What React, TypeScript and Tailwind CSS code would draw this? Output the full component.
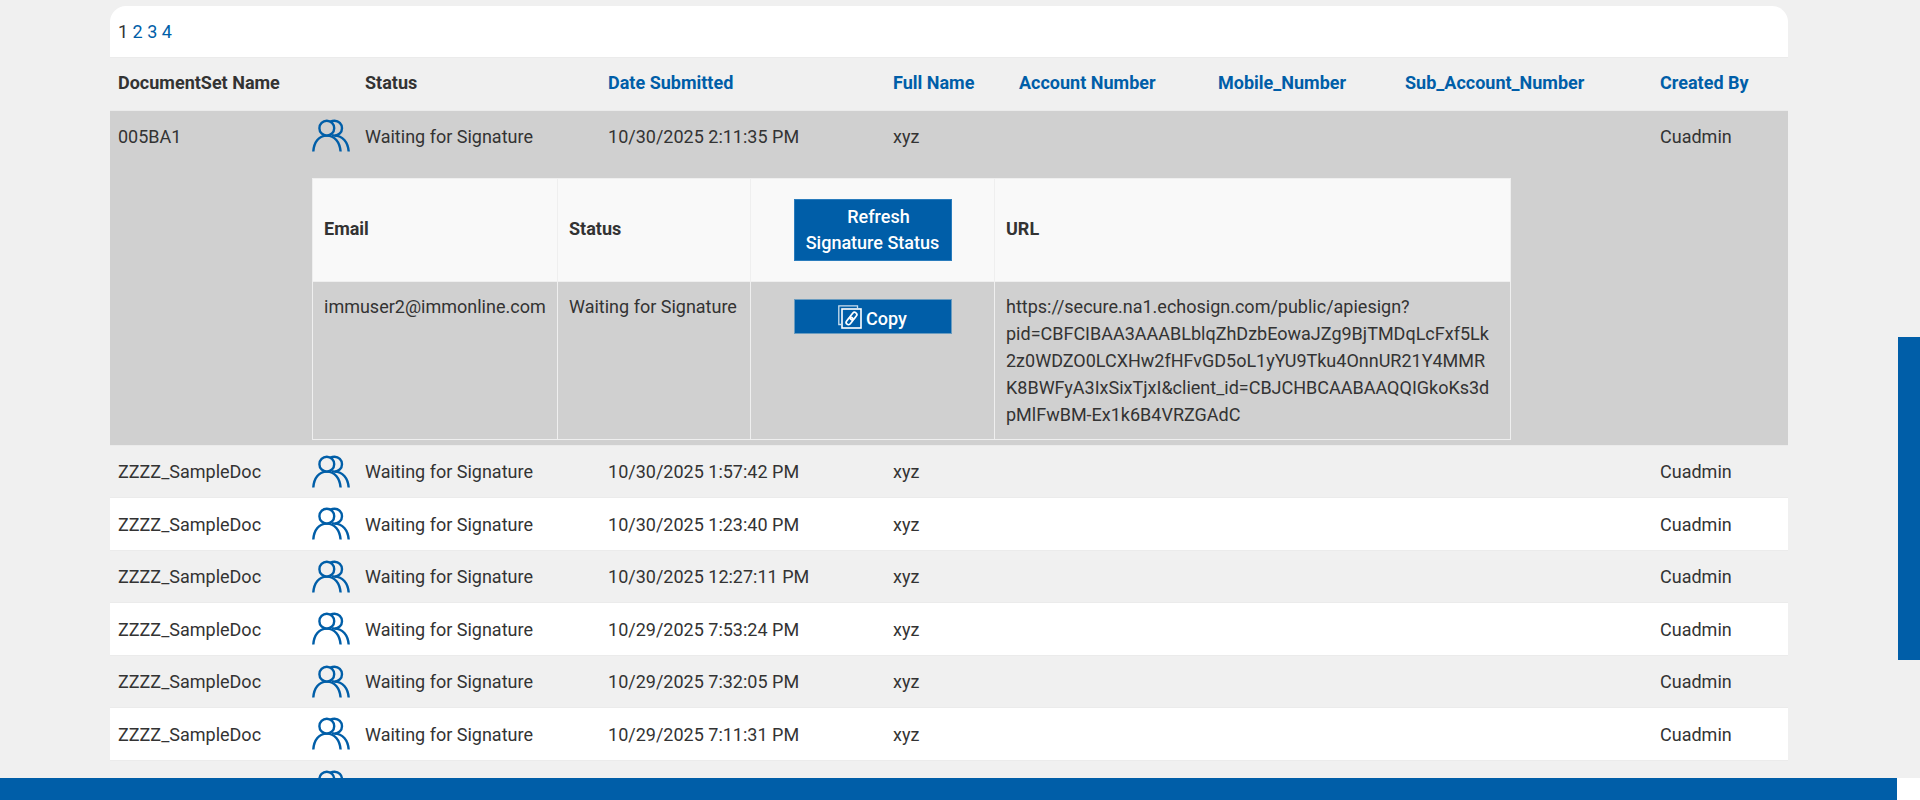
import { Fragment } from "react";

const headings = [
  { label: "DocumentSet Name", span: 2, sortable: false },
  { label: "Status", span: 1, sortable: false },
  { label: "Date Submitted", span: 1, sortable: true },
  { label: "Full Name", span: 1, sortable: true },
  { label: "Account Number", span: 1, sortable: true },
  { label: "Mobile_Number", span: 1, sortable: true },
  { label: "Sub_Account_Number", span: 1, sortable: true },
  { label: "Created By", span: 1, sortable: true },
];

const waiting = { status: "Waiting for Signature", fullName: "xyz", createdBy: "Cuadmin" };

const rows = [
  { ...waiting, name: "005BA1", date: "10/30/2025 2:11:35 PM", open: true },
  { ...waiting, name: "ZZZZ_SampleDoc", date: "10/30/2025 1:57:42 PM", open: false },
  { ...waiting, name: "ZZZZ_SampleDoc", date: "10/30/2025 1:23:40 PM", open: false },
  { ...waiting, name: "ZZZZ_SampleDoc", date: "10/30/2025 12:27:11 PM", open: false },
  { ...waiting, name: "ZZZZ_SampleDoc", date: "10/29/2025 7:53:24 PM", open: false },
  { ...waiting, name: "ZZZZ_SampleDoc", date: "10/29/2025 7:32:05 PM", open: false },
  { ...waiting, name: "ZZZZ_SampleDoc", date: "10/29/2025 7:11:31 PM", open: false },
  { name: "", status: "", date: "", fullName: "", createdBy: "", open: false },
];

const signUrl =
  "https://secure.na1.echosign.com/public/apiesign?pid=CBFCIBAA3AAABLblqZhDzbEowaJZg9BjTMDqLcFxf5Lk2z0WDZO0LCXHw2fHFvGD5oL1yYU9Tku4OnnUR21Y4MMRK8BWFyA3IxSixTjxI&client_id=CBJCHBCAABAAQQIGkoKs3dpMlFwBM-Ex1k6B4VRZGAdC";

function SignersIcon() {
  return (
    <svg viewBox="0 0 38 34" className="h-[34px] w-[38px]" fill="none" stroke="#005ea8" strokeWidth="2.4">
      <circle cx="14.8" cy="9.2" r="7.4" />
      <path d="M18.500 2.600C20 1.900 21.300 1.800 22.600 1.800a7.400 7.400 0 0 1 0 14.800c-1 0-1.800-.1-2.600-.4" />
      <path d="M1.300 32.500C1.900 23 7 16.600 14.800 16.600S27.800 23 28.600 32.500" />
      <path d="M22.600 16.600C30.500 16.600 36 23 36.700 32.500" />
    </svg>
  );
}

function CopyLinkIcon() {
  return (
    <svg viewBox="0 0 24 24" className="h-6 w-6" fill="none" stroke="#fff">
      <path d="M3 19.500H.8V.8H19.500V3" strokeWidth="1.300" strokeOpacity=".8" />
      <rect x="4" y="4" width="19" height="19" strokeWidth="1.600" />
      <g transform="rotate(-52 13.500 13.500)" strokeWidth="1.700">
        <rect x="6.300" y="11.200" width="8.200" height="4.600" rx="2.300" />
        <rect x="12.500" y="11.200" width="8.200" height="4.600" rx="2.300" />
      </g>
    </svg>
  );
}

function SignerTable() {
  const cell = "border border-[#efefef] pl-[11px]";
  return (
    <table className="w-9/10 table-fixed border-collapse">
      <colgroup>
        <col className="w-[245px]" />
        <col className="w-[193px]" />
        <col className="w-[244px]" />
        <col />
      </colgroup>
      <thead>
        <tr className="h-[103px] bg-[#f9f9f9] text-left">
          <th className={`${cell} pb-1`}>Email</th>
          <th className={`${cell} pb-1`}>Status</th>
          <th className={`${cell} pr-[11px] text-center`}>
            <button className="w-[158px] border border-[#2a7cbd] bg-[#005ea8] py-1 text-lg leading-[26px] font-medium text-white">
              <span className="pl-3">Refresh</span>
              <br />
              Signature Status
            </button>
          </th>
          <th className={`${cell} pb-1`}>URL</th>
        </tr>
      </thead>
      <tbody>
        <tr className="align-top">
          <td className={`${cell} py-[11px]`}>immuser2@immonline.com</td>
          <td className={`${cell} py-[11px]`}>Waiting for Signature</td>
          <td className={`${cell} py-[17px] pr-[11px]`}>
            <button className="mx-auto flex h-[35px] w-[158px] items-center justify-center gap-1 border border-[#6a9cc0] bg-[#005ea8] text-lg font-medium text-white">
              <CopyLinkIcon />
              <span className="pt-1">Copy</span>
            </button>
          </td>
          <td className={`${cell} py-[11px] pr-5 wrap-anywhere`}>{signUrl}</td>
        </tr>
      </tbody>
    </table>
  );
}

export default function App() {
  return (
    <div className="grid h-screen grid-cols-[minmax(0,1fr)_22px] grid-rows-[minmax(0,1fr)_22px] bg-white font-['Roboto',sans-serif] text-lg leading-[27px] text-[#333]">
      <main className="overflow-hidden bg-[#f0f0f0] px-[110px] pt-1.5">
        <nav aria-label="Pages" className="rounded-t-2xl border-b border-[#ebebeb] bg-white px-2 py-3">
          <span>1</span> <a href="#2" className="text-[#005ea8]">2</a>{" "}
          <a href="#3" className="text-[#005ea8]">3</a>{" "}
          <a href="#4" className="text-[#005ea8]">4</a>
        </nav>

        <table className="w-full table-fixed border-collapse">
          <colgroup>
            <col className="w-[194px]" />
            <col className="w-[53px]" />
            <col className="w-[243px]" />
            <col className="w-[285px]" />
            <col className="w-[126px]" />
            <col className="w-[199px]" />
            <col className="w-[187px]" />
            <col className="w-[255px]" />
            <col className="w-[136px]" />
          </colgroup>
          <thead>
            <tr className="h-[52px] border-b border-[#ebebeb] text-left">
              {headings.map((h) => (
                <th key={h.label} colSpan={h.span} className="px-2 pb-0.5">
                  {h.sortable ? (
                    <a href="#sort" className="text-[#005ea8]">{h.label}</a>
                  ) : (
                    h.label
                  )}
                </th>
              ))}
            </tr>
          </thead>
          <tbody>
            {rows.map((row, i) => (
              <Fragment key={i}>
                <tr
                  className={
                    row.open
                      ? "h-[52px] bg-[#d0d0d0]"
                      : i % 2
                        ? "h-[52px] border-b border-[#ebebeb] bg-[#f0f0f0]"
                        : "h-[53px] border-b border-[#ebebeb] bg-white"
                  }
                >
                  <td className="px-2">{row.name}</td>
                  <td className="pl-2">
                    <button aria-label="Show signers" className="block">
                      <SignersIcon />
                    </button>
                  </td>
                  <td className="px-2">{row.status}</td>
                  <td className="px-2">{row.date}</td>
                  <td className="px-2">{row.fullName}</td>
                  <td />
                  <td />
                  <td />
                  <td className="px-2">{row.createdBy}</td>
                </tr>
                {row.open && (
                  <tr className="border-b border-[#ebebeb] bg-[#d0d0d0]">
                    <td />
                    <td colSpan={7} className="px-2 pt-4 pb-[5px]">
                      <SignerTable />
                    </td>
                    <td />
                  </tr>
                )}
              </Fragment>
            ))}
          </tbody>
        </table>
      </main>

      {/* vertical scrollbar */}
      <div className="flex flex-col bg-[#f0f0f0]">
        <div className="flex-[337]" />
        <div className="flex-[323] bg-[#005ea8]" />
        <div className="flex-[118]" />
      </div>

      {/* horizontal scrollbar */}
      <div className="mr-px bg-[#005ea8]" />
    </div>
  );
}
